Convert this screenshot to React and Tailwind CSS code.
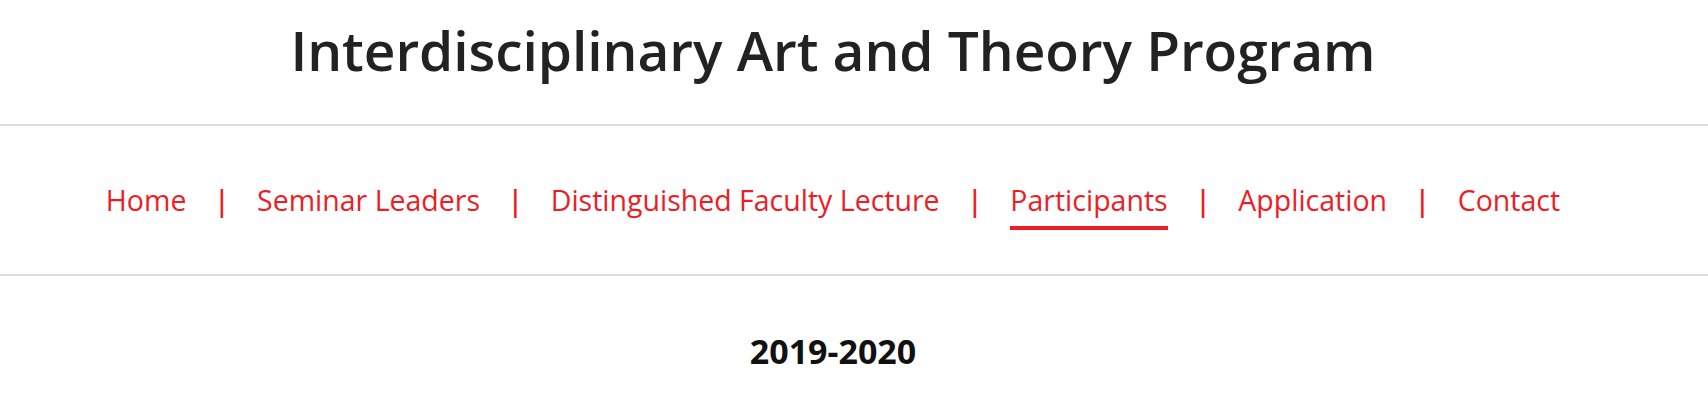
import React from "react";

const items = ["Home", "Seminar Leaders", "Distinguished Faculty Lecture", "Participants", "Application", "Contact"];

export default function App() {
  return (
    <div className="w-[1708px] bg-white" style={{ fontFamily: '"Open Sans", "Noto Sans", sans-serif' }}>
      <header className="h-[124px] flex items-start justify-center pt-[20px] pr-[42px]">
        <h1 className="text-[55px] leading-[60px] font-semibold text-[#222222] tracking-[-0.05px]">
          Interdisciplinary Art and Theory Program
        </h1>
      </header>
      <nav className="h-[152px] border-y-2 border-[#dddddd] flex items-start justify-center pt-[54px] pr-[42px]">
        <ul className="flex items-start gap-[27.5px] text-[28.5px] leading-[40px] text-[#ee1d25]">
          {items.map((it, i) => (
            <React.Fragment key={it}>
              {i > 0 && <li className="h-[40px] font-semibold">|</li>}
              <li className="flex flex-col">
                <span>{it}</span>
                <span className={"mt-[6px] h-[4px] " + (it === "Participants" ? "bg-[#ee1d25]" : "bg-transparent")} />
              </li>
            </React.Fragment>
          ))}
        </ul>
      </nav>
      <section className="pt-[58px] pb-[40px] flex justify-center pr-[42px]">
        <h2 className="text-[34px] leading-none font-bold text-[#111111]">2019-2020</h2>
      </section>
    </div>
  );
}
